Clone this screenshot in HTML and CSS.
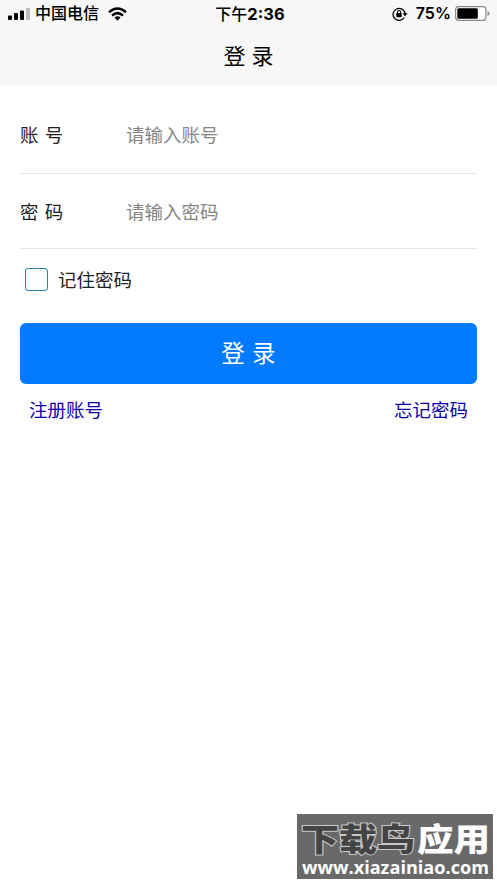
FILE: index.html
```html
<!DOCTYPE html>
<html lang="zh-CN">
<head>
<meta charset="utf-8">
<title>登录</title>
<link rel="stylesheet" href="styles.css">
</head>
<body>
<header class="top">
  <div class="status">
    <div class="status-left">
      <svg class="signal" width="22" height="12" viewBox="0 0 22 12"><rect y="7.5" width="4" height="4.5" rx="1"/><rect x="6" y="5" width="4" height="7" rx="1"/><rect x="12" y="2.5" width="4" height="9.5" rx="1"/><rect x="18" width="4" height="12" rx="1" fill="#bbb"/></svg>
      <span class="carrier">中国电信</span>
      <svg class="wifi" width="19" height="14" viewBox="0 0 19 14" fill="none" stroke="#000" stroke-width="2.5"><path d="M1 5.2Q9.500-2.200 18 5.200M4 8.600Q9.500 3.600 15 8.600"/><path d="M6.500 10.600Q9.500 8 12.500 10.600L9.500 13.700Z" fill="#000" stroke="none"/></svg>
    </div>
    <div class="time">下午<b>2:36</b></div>
    <div class="status-right">
      <svg class="lock" width="16" height="14" viewBox="0 0 16 14" fill="none" stroke="#000" stroke-width="1.300"><path d="M12.200 10.500A6 6 0 1 1 13 6.500"/><path d="M10.600 6.200h5l-2.500 3z" fill="#000" stroke="none"/><rect x="4.300" y="6.100" width="5.400" height="4.200" rx=".5" fill="#000" stroke="none"/><path d="M5.500 6.500V5a1.500 1.500 0 0 1 3 0v1.500" stroke-width="1.100"/></svg>
      <span class="percent">75%</span>
      <svg class="battery" width="35" height="15" viewBox="0 0 35 15"><rect x=".6" y=".6" width="30.300" height="13.800" rx="3.300" fill="#fff" stroke="#888" stroke-width="1.200"/><rect x="2.300" y="2.300" width="20.500" height="10.400" rx="1.500"/><path d="M32.500 5q2 .7 2 2.500t-2 2.500z" fill="#888"/></svg>
    </div>
  </div>
  <h1 class="title">登 录</h1>
</header>
<main class="form">
  <label class="field"><span class="label">账 号</span><input class="input" type="text" placeholder="请输入账号"></label>
  <label class="field"><span class="label">密 码</span><input class="input" type="password" placeholder="请输入密码"></label>
  <label class="remember"><input class="check" type="checkbox"><span class="remember-text">记住密码</span></label>
  <button class="submit" type="button">登 录</button>
  <nav class="links"><a href="#">注册账号</a><a href="#">忘记密码</a></nav>
</main>
<aside class="mark">
  <svg width="196" height="65" viewBox="0 0 196 65">
    <g class="mark-name"><text class="mark-dark" x="4" y="37" textLength="114" lengthAdjust="spacingAndGlyphs">下载鸟</text><text class="mark-light" x="120" y="37" textLength="73" lengthAdjust="spacingAndGlyphs">应用</text></g>
    <text class="mark-url" x="5" y="59.500" textLength="187" lengthAdjust="spacingAndGlyphs">www.xiazainiao.com</text>
  </svg>
</aside>
</body>
</html>
```
FILE: styles.css
```css
* { box-sizing: border-box; }
body {
  margin: 0;
  min-height: 883px;
  background: #fff;
  color: #222;
  font-family: "Noto Sans CJK SC", sans-serif;
  font-size: 18.5px;
  font-weight: 400;
}
.top { height: 85px; background: #f7f7f7; color: #000; }
.status {
  display: grid;
  grid-template-columns: 1fr auto 1fr;
  align-items: center;
  height: 27px;
  padding: 0 8px;
  font-size: 16px;
  font-weight: 500;
  line-height: 25px;
}
.status-left, .status-right { display: flex; align-items: center; }
.status-right { justify-content: flex-end; }
.carrier { margin: 0 9px 2px 5px; }
.time { padding-left: 3px; }
.time b, .percent { font-family: Inter, sans-serif; font-weight: 700; }
.time b { font-size: 16.500px; }
.percent { font-size: 16px; font-weight: 600; margin: 0 4px 0 8px; }
.battery { margin-right: -1px; }
.title {
  margin: 0;
  font-size: 22px;
  font-weight: 400;
  line-height: 54px;
  text-align: center;
  word-spacing: 1px;
}
.form { padding: 13px 20px 0; }
.field {
  display: flex;
  align-items: center;
  height: 75px;
  padding-bottom: 1px;
  border-bottom: 1px solid #e5e5e5;
}
.field:first-child { height: 76px; padding-bottom: 3px; }
.label { width: 106px; word-spacing: 2px; }
.input {
  flex: 1;
  min-width: 0;
  padding: 0;
  border: 0;
  outline: 0;
  background: none;
  font: inherit;
}
.input::placeholder { color: #858585; opacity: 1; }
.remember {
  display: flex;
  align-items: center;
  gap: 10px;
  height: 61px;
  padding-left: 5px;
}
.remember-text { padding-bottom: 2px; }
.check {
  appearance: none;
  width: 23px;
  height: 23px;
  margin: 0;
  border: 1px solid #2581ad;
  border-radius: 3px;
}
.submit {
  display: block;
  width: 100%;
  height: 61px;
  margin-top: 13px;
  padding: 0 0 3px;
  border: 0;
  border-radius: 6px;
  background: #007aff;
  color: #fff;
  font: inherit;
  font-size: 23.500px;
  word-spacing: 2px;
}
.links {
  display: flex;
  justify-content: space-between;
  padding: 11px 9px 0;
  line-height: 28px;
}
.links a { color: #0c00aa; text-decoration: none; }
.mark {
  position: absolute;
  left: 297px;
  top: 814px;
  width: 196px;
  height: 65px;
  background: #696969;
}
.mark svg { display: block; }
.mark-name { font-size: 32px; font-weight: 900; }
.mark-dark { fill: #444; stroke: #c8c8c8; stroke-width: 2px; paint-order: stroke; }
.mark-light { fill: #fff; }
.mark-url { fill: #fff; font: 700 18.500px "Open Sans", sans-serif; }
```
